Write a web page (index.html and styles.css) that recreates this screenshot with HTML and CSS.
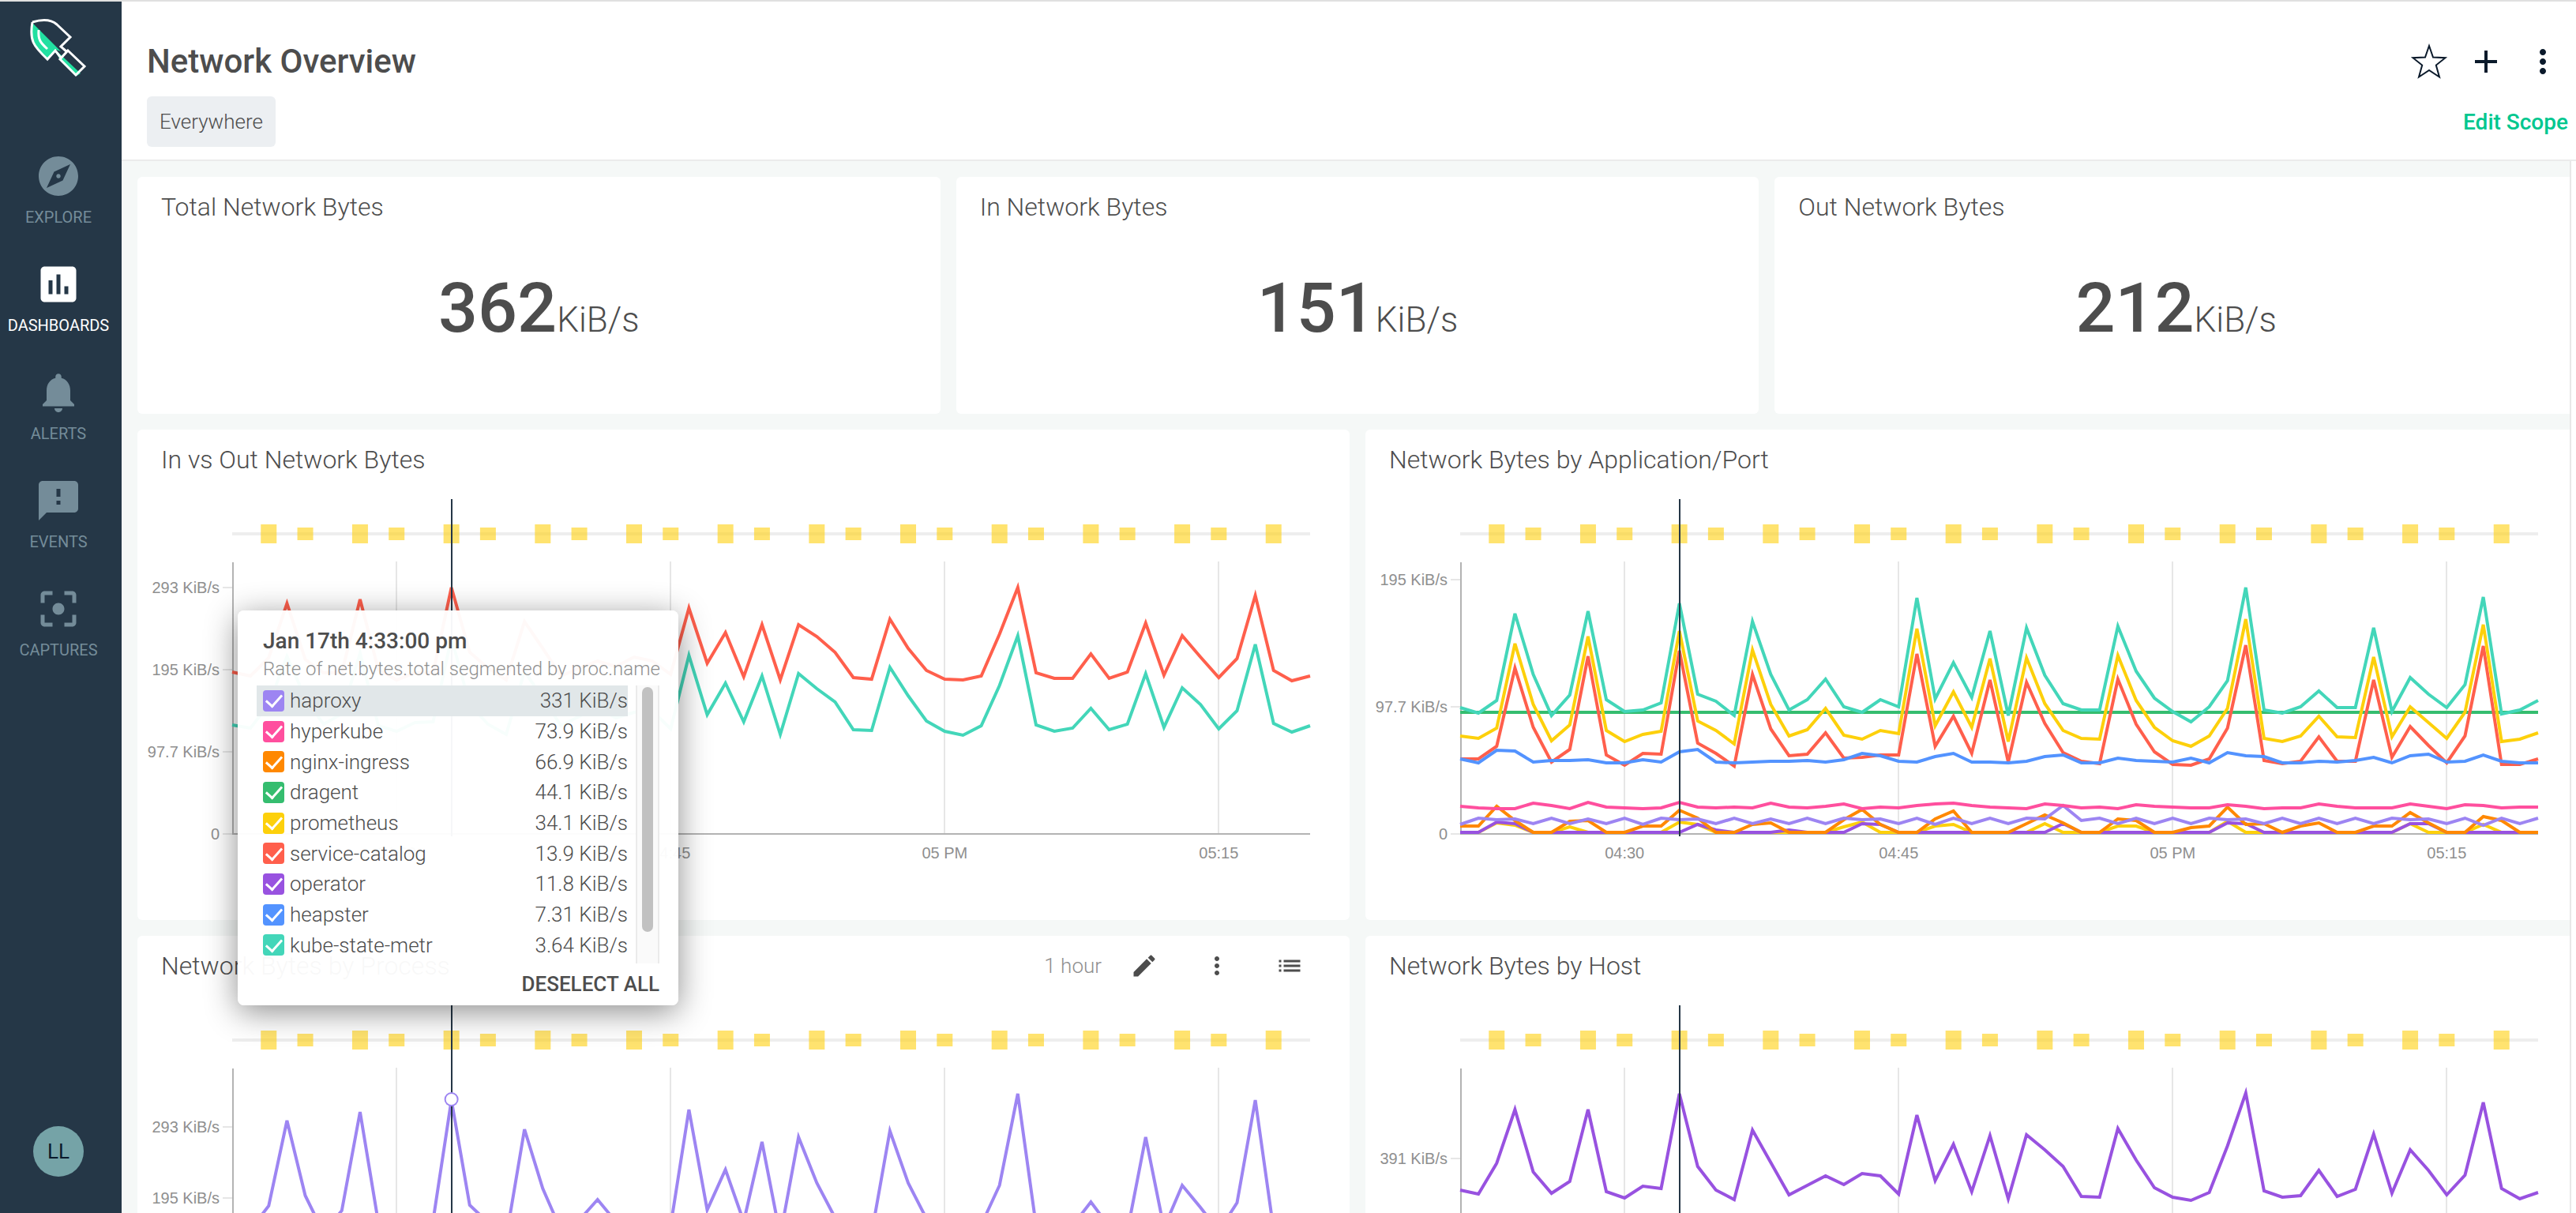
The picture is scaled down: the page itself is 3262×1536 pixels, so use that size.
FILE: index.html
```html
<!DOCTYPE html>
<html lang="en">
<head>
<meta charset="utf-8">
<title>Network Overview</title>
<link rel="stylesheet" href="styles.css">
</head>
<body>
<svg class="defs" aria-hidden="true">
  <defs>
    <!-- One user unit across is one minute, one user unit down is one pixel -->
    <g id="time-grid">
      <path class="event-line" d="M0 44H59"/>
      <path class="event-major" d="M2 32v24M7 32v24M12 32v24M17 32v24M22 32v24M27 32v24M32 32v24M37 32v24M42 32v24M47 32v24M52 32v24M57 32v24"/>
      <path class="event-minor" d="M4 36v16M9 36v16M14 36v16M19 36v16M24 36v16M29 36v16M34 36v16M39 36v16M44 36v16M49 36v16M54 36v16"/>
      <path class="grid-line" d="M9 79V424M24 79V424M39 79V424M54 79V424"/>
      <path class="axis-line" d="M0 424H59M0.04 80V424"/>
    </g>
    <path id="cursor" class="cursor-line" d="M12 0V427"/>
    <symbol id="icon-more" viewBox="0 0 24 24"><path d="M12 8c1.1 0 2-.9 2-2s-.9-2-2-2-2 .9-2 2 .9 2 2 2zm0 2c-1.100 0-2 .9-2 2s.9 2 2 2 2-.9 2-2-.9-2-2-2zm0 6c-1.100 0-2 .9-2 2s.9 2 2 2 2-.9 2-2-.9-2-2-2z"/></symbol>
  </defs>
</svg>

<div class="app">
  <nav class="sidebar">
    <a class="logo" href="#" aria-label="Home">
      <svg viewBox="0 0 74 74" fill="none">
        <path d="M4 5 40 41 34 39 23 50C4 33-1 25 4 5Z" fill="#22e0a1"/>
        <path d="M31 37 65 69 60 72 38 50Z" fill="#22e0a1"/>
        <path d="M4 4C14 1 27 0 35 7L52 23 40 35 47 41M40 49 33 40 23 51C5 34 0 27 4 4M49 40 70 60 59 71 39 51Z" stroke="#fff" stroke-width="3"/>
        <path d="M12 14C11 26 14 30 23 38" stroke="#fff" stroke-width="3"/>
      </svg>
    </a>
    <ul class="nav">
      <li><a class="nav-item" href="#"><svg viewBox="0 0 24 24"><path d="M12 10.900c-.61 0-1.100.49-1.100 1.100s.49 1.100 1.100 1.100c.61 0 1.100-.49 1.100-1.100s-.49-1.100-1.100-1.100zM12 2C6.480 2 2 6.480 2 12s4.480 10 10 10 10-4.480 10-10S17.520 2 12 2zm2.190 12.190L6 18l3.810-8.190L18 6l-3.810 8.190z"/></svg>EXPLORE</a></li>
      <li><a class="nav-item active" href="#"><svg viewBox="0 0 24 24"><path d="M19 3H5c-1.100 0-2 .9-2 2v14c0 1.100.9 2 2 2h14c1.100 0 2-.9 2-2V5c0-1.100-.9-2-2-2zM9 17H7v-7h2v7zm4 0h-2V7h2v10zm4 0h-2v-4h2v4z"/></svg>DASHBOARDS</a></li>
      <li><a class="nav-item" href="#"><svg viewBox="0 0 24 24"><path d="M12 22c1.100 0 2-.9 2-2h-4c0 1.100.9 2 2 2zm6-6v-5c0-3.070-1.630-5.640-4.500-6.320V4c0-.83-.67-1.500-1.500-1.500s-1.500.67-1.500 1.500v.68C7.640 5.360 6 7.920 6 11v5l-2 2v1h16v-1l-2-2z"/></svg>ALERTS</a></li>
      <li><a class="nav-item" href="#"><svg viewBox="0 0 24 24"><path d="M20 2H4c-1.100 0-2 .9-2 2v18l4-4h14c1.100 0 2-.9 2-2V4c0-1.100-.9-2-2-2zm-7 12h-2v-2h2v2zm0-4h-2V6h2v4z"/></svg>EVENTS</a></li>
      <li><a class="nav-item" href="#"><svg viewBox="0 0 24 24"><path d="M12 9c-1.660 0-3 1.340-3 3s1.340 3 3 3 3-1.340 3-3-1.340-3-3-3zm-7 6H3v4c0 1.100.9 2 2 2h4v-2H5v-4zM5 5h4V3H5c-1.100 0-2 .9-2 2v4h2V5zm14-2h-4v2h4v4h2V5c0-1.100-.9-2-2-2zm0 16h-4v2h4c1.100 0 2-.9 2-2v-4h-2v4z"/></svg>CAPTURES</a></li>
    </ul>
    <button class="avatar" type="button">LL</button>
  </nav>

  <main class="main">
    <header class="header">
      <div class="header-row">
        <h1>Network Overview</h1>
        <div class="header-actions">
          <button class="icon-button" type="button" aria-label="Favorite"><svg viewBox="0 0 48 48"><path d="M24 4 29 18.500 44.500 19.200 32.800 28.500 37 43.500 24 35 11 43.500 15.200 28.500 3.500 19.200 19 18.500Z" fill="none" stroke="currentColor" stroke-width="2"/></svg></button>
          <button class="icon-button" type="button" aria-label="Add"><svg viewBox="0 0 48 48"><path d="M24 10V38M10 24H38" stroke="currentColor" stroke-width="4"/></svg></button>
          <button class="icon-button" type="button" aria-label="More"><svg><use href="#icon-more"/></svg></button>
        </div>
      </div>
      <div class="header-row">
        <button class="scope" type="button">Everywhere</button>
        <a class="edit-scope" href="#">Edit Scope</a>
      </div>
    </header>

    <div class="content">
      <div class="grid">
        <section class="card stat"><h2>Total Network Bytes</h2><p class="value">362<span>KiB/s</span></p></section>
        <section class="card stat"><h2>In Network Bytes</h2><p class="value">151<span>KiB/s</span></p></section>
        <section class="card stat"><h2>Out Network Bytes</h2><p class="value">212<span>KiB/s</span></p></section>

        <section class="card chart">
          <div class="card-head"><h2>In vs Out Network Bytes</h2></div>
          <div class="chart-body">
            <ol class="y-axis step-104"><li>293 KiB/s</li><li>195 KiB/s</li><li>97.7 KiB/s</li><li>0</li></ol>
            <div class="plot">
              <svg viewBox="0 0 59 428" preserveAspectRatio="none">
                <use href="#time-grid"/>
                <polyline class="line teal" points="0,286 1,290 2,260 3,199 4,252 5,285 6,272 7,195 8,287 9,294 10,283 11,282 12,176 13,260 14,285 15,298 16,218 17,252 18,287 19,275 20,264 21,277 22,270 23,268 24,291 25,198 26,273 27,233 28,282 29,224 30,298 31,221 32,240 33,257 34,292 35,293 36,213 37,249 38,281 39,294 40,299 41,287 42,236 43,173 44,286 45,294 46,290 47,265 48,292 49,285 50,221 51,289 52,239 53,260 54,291 55,268 56,184 57,284 58,295 59,287"/>
                <polyline class="line red" points="0,219 1,224 2,201 3,132 4,203 5,220 6,220 7,127 8,216 9,229 10,220 11,220 12,112 13,194 14,214 15,229 16,155 17,189 18,224 19,214 20,205 21,212 22,200 23,205 24,222 25,138 26,208 27,169 28,225 29,159 30,229 31,159 32,174 33,194 34,226 35,228 36,152 37,189 38,217 39,228 40,229 41,224 42,171 43,112 44,220 45,227 46,227 47,196 48,227 49,219 50,157 51,223 52,173 53,200 54,226 55,202 56,122 57,217 58,230 59,224"/>
                <use href="#cursor"/>
              </svg>
              <div class="x-axis"><span>04:30</span><span>04:45</span><span>05 PM</span><span>05:15</span></div>

              <div class="tooltip">
                <h3>Jan 17th 4:33:00 pm</h3>
                <p>Rate of net.bytes.total segmented by proc.name</p>
                <div class="tooltip-scroll">
                  <ul class="series">
                    <li class="selected"><label><input class="c-lavender" type="checkbox" checked>haproxy</label><span>331 KiB/s</span></li>
                    <li><label><input class="c-pink" type="checkbox" checked>hyperkube</label><span>73.9 KiB/s</span></li>
                    <li><label><input class="c-orange" type="checkbox" checked>nginx-ingress</label><span>66.9 KiB/s</span></li>
                    <li><label><input class="c-green" type="checkbox" checked>dragent</label><span>44.1 KiB/s</span></li>
                    <li><label><input class="c-yellow" type="checkbox" checked>prometheus</label><span>34.1 KiB/s</span></li>
                    <li><label><input class="c-red" type="checkbox" checked>service-catalog</label><span>13.9 KiB/s</span></li>
                    <li><label><input class="c-purple" type="checkbox" checked>operator</label><span>11.8 KiB/s</span></li>
                    <li><label><input class="c-blue" type="checkbox" checked>heapster</label><span>7.31 KiB/s</span></li>
                    <li><label><input class="c-teal" type="checkbox" checked>kube-state-metr</label><span>3.64 KiB/s</span></li>
                  </ul>
                  <div class="scroll-track"><div class="scroll-thumb"></div></div>
                </div>
                <button class="deselect" type="button">DESELECT ALL</button>
              </div>
            </div>
          </div>
        </section>

        <section class="card chart">
          <div class="card-head"><h2>Network Bytes by Application/Port</h2></div>
          <div class="chart-body">
            <ol class="y-axis step-161"><li>195 KiB/s</li><li>97.7 KiB/s</li><li>0</li></ol>
            <div class="plot">
              <svg viewBox="0 0 59 428" preserveAspectRatio="none">
                <use href="#time-grid"/>
                <polyline class="line yellow" points="0,422 1,422 2,410 3,413 4,422 5,422 6,415 7,422 11,422 12,409 13,412 14,422 20,422 21,415 22,409 23,422 25,422 26,414 27,412 28,422 31,422 32,411 33,422 35,422 36,414 37,414 38,422 41,422 42,408 43,422 51,422 52,411 53,422 55,422 56,412 57,422 59,422"/>
                <polyline class="line purple" points="0,422 1,422 2,409 3,411 4,422 12,422 13,412 14,419 15,422 17,422 18,419 19,422 21,422 22,411 23,412 24,422 32,422 33,411 34,422 41,422 42,410 43,411 44,422 51,422 52,411 53,411 54,422 59,422"/>
                <polyline class="line orange" points="0,414 1,414 2,389 3,407 4,422 5,422 6,408 7,407 8,422 9,422 10,414 11,414 12,394 13,404 14,422 15,422 16,412 17,410 18,422 19,422 20,422 21,406 22,393 23,412 24,422 25,422 26,405 27,395 28,422 29,422 30,422 31,411 32,400 33,410 34,422 35,422 36,405 37,407 38,422 39,422 40,416 41,414 42,390 43,412 44,411 45,422 46,414 47,410 48,422 49,422 50,414 51,414 52,397 53,410 54,422 55,422 56,402 57,407 58,422 59,422"/>
                <polyline class="line lavender" points="0,412 1,404 2,406 3,405 4,411 5,404 6,411 7,405 8,411 9,404 10,412 11,404 12,406 13,405 14,411 15,404 16,411 17,405 18,411 19,404 20,411 21,404 22,406 23,405 24,411 25,404 26,412 27,404 28,411 29,404 30,411 31,404 32,405 33,388 34,407 35,404 36,411 37,404 38,411 39,404 40,411 41,404 42,406 43,405 44,411 45,404 46,411 47,404 48,411 49,404 50,411 51,404 52,406 53,405 54,411 55,404 56,413 57,404 58,411 59,404"/>
                <polyline class="line pink" points="0,389 1,391 2,392 3,392 4,385 5,388 6,392 7,384 8,390 9,391 10,392 11,391 12,384 13,390 14,391 15,390 16,391 17,385 18,390 19,391 20,389 21,386 22,392 23,390 24,391 25,388 26,386 27,385 28,388 29,390 30,391 31,392 32,386 33,388 34,391 35,390 36,392 37,387 38,389 39,390 40,391 41,391 42,387 43,389 44,392 45,391 46,391 47,386 48,389 49,391 50,391 51,391 52,386 53,389 54,392 55,387 56,388 57,391 58,390 59,390"/>
                <polyline class="line green" points="0,270 59,270"/>
                <polyline class="line red" points="0,329 1,329 2,313 3,214 4,289 5,333 6,317 7,199 8,324 9,337 10,322 11,323 12,192 13,309 14,322 15,338 16,222 17,291 18,325 19,323 20,296 21,328 22,327 23,324 24,324 25,196 26,313 27,275 28,322 29,229 30,333 31,232 32,284 33,321 34,332 35,335 36,228 37,285 38,320 39,336 40,337 41,329 42,290 43,185 44,331 45,335 46,332 47,301 48,332 49,332 50,229 51,327 52,288 53,312 54,334 55,300 56,186 57,336 58,336 59,329"/>
                <polyline class="line blue" points="0,329 1,334 2,318 3,319 4,333 5,331 6,331 7,330 8,334 9,334 10,330 11,333 12,320 13,317 14,333 15,334 16,333 17,332 18,332 19,331 20,333 21,330 22,322 23,325 24,332 25,333 26,326 27,322 28,333 29,333 30,334 31,332 32,326 33,324 34,334 35,334 36,328 37,331 38,332 39,333 40,328 41,334 42,321 43,325 44,326 45,334 46,334 47,332 48,333 49,331 50,327 51,334 52,325 53,323 54,333 55,332 56,324 57,332 58,334 59,334"/>
                <polyline class="line yellow" points="0,300 1,303 2,290 3,183 4,260 5,306 6,286 7,174 8,293 9,307 10,298 11,294 12,167 13,281 14,293 15,310 16,191 17,260 18,300 19,292 20,265 21,299 22,304 23,293 24,297 25,164 26,287 27,244 28,289 29,202 30,307 31,201 32,259 33,293 34,303 35,304 36,198 37,255 38,289 39,306 40,313 41,300 42,265 43,152 44,303 45,307 46,300 47,275 48,301 49,302 50,200 51,301 52,263 53,283 54,303 55,270 56,159 57,307 58,304 59,296"/>
                <polyline class="line teal" points="0,264 1,271 2,255 3,145 4,222 5,274 6,248 7,142 8,254 9,269 10,267 11,258 12,132 13,247 14,256 15,274 16,155 17,222 18,267 19,254 20,228 21,263 22,270 23,254 24,263 25,125 26,253 27,207 28,251 29,167 30,274 31,163 32,223 33,259 34,267 35,267 36,161 37,218 38,252 39,269 40,282 41,263 42,230 43,112 44,267 45,271 46,263 47,243 48,264 49,264 50,163 51,269 52,226 53,247 54,264 55,235 56,124 57,272 58,267 59,255"/>
                <use href="#cursor"/>
              </svg>
              <div class="x-axis"><span>04:30</span><span>04:45</span><span>05 PM</span><span>05:15</span></div>
            </div>
          </div>
        </section>

        <section class="card chart">
          <div class="card-head">
            <h2>Network Bytes by Process</h2>
            <div class="card-tools">
              <span>1 hour</span>
              <button type="button" aria-label="Edit"><svg viewBox="0 0 24 24"><path d="M3 17.250V21h3.750L17.810 9.940l-3.750-3.750L3 17.250zM20.710 7.040c.39-.39.39-1.020 0-1.410l-2.340-2.340c-.39-.39-1.020-.39-1.410 0l-1.830 1.830 3.750 3.750 1.830-1.830z"/></svg></button>
              <button type="button" aria-label="Panel menu"><svg><use href="#icon-more"/></svg></button>
              <button type="button" aria-label="Legend"><svg viewBox="0 0 24 24"><path d="M3 13h2v-2H3v2zm0 4h2v-2H3v2zm0-8h2V7H3v2zm4 4h14v-2H7v2zm0 4h14v-2H7v2zM7 7v2h14V7H7z"/></svg></button>
            </div>
          </div>
          <div class="chart-body">
            <ol class="y-axis step-90"><li>293 KiB/s</li><li>195 KiB/s</li><li>97.7 KiB/s</li><li>0</li></ol>
            <div class="plot">
              <svg viewBox="0 0 59 428" preserveAspectRatio="none">
                <use href="#time-grid"/>
                <polyline class="line lavender" points="0,284 1,284 2,254 3,146 4,241 5,288 6,260 7,135 8,275 9,300 10,287 11,272 12,120 13,253 14,275 15,294 16,157 17,232 18,285 19,272 20,246 21,274 22,267 23,270 24,279 25,132 26,259 27,208 28,274 29,173 30,292 31,167 32,225 33,269 34,294 35,289 36,159 37,225 38,270 39,294 40,297 41,278 42,228 43,112 44,279 45,290 46,279 47,249 48,280 49,286 50,167 51,282 52,228 53,256 54,286 55,250 56,120 57,284 58,290 59,287"/>
                <use href="#cursor"/>
                <path class="dot-ring" d="M12 119h0"/>
                <path class="dot-fill" d="M12 119h0"/>
              </svg>
              <div class="x-axis"><span>04:30</span><span>04:45</span><span>05 PM</span><span>05:15</span></div>
            </div>
          </div>
        </section>

        <section class="card chart">
          <div class="card-head"><h2>Network Bytes by Host</h2></div>
          <div class="chart-body">
            <ol class="y-axis step-230"><li>391 KiB/s</li><li>0</li></ol>
            <div class="plot">
              <svg viewBox="0 0 59 428" preserveAspectRatio="none">
                <use href="#time-grid"/>
                <polyline class="line purple" points="0,234 1,239 2,200 3,132 4,211 5,238 6,223 7,132 8,236 9,244 10,229 11,232 12,112 13,204 14,234 15,246 16,158 17,199 18,240 19,228 20,216 21,227 22,213 23,216 24,239 25,139 26,222 27,176 28,236 29,165 30,245 31,164 32,183 33,204 34,242 35,243 36,156 37,196 38,231 39,243 40,247 41,237 42,178 43,111 44,235 45,243 46,241 47,209 48,242 49,233 50,163 51,238 52,183 53,209 54,240 55,215 56,123 57,232 58,245 59,237"/>
                <use href="#cursor"/>
              </svg>
              <div class="x-axis"><span>04:30</span><span>04:45</span><span>05 PM</span><span>05:15</span></div>
            </div>
          </div>
        </section>
      </div>
    </div>
  </main>
</div>
</body>
</html>
```
FILE: styles.css
```css
* { box-sizing: border-box; }

body {
  margin: 0;
  font-family: Roboto, "Liberation Sans", sans-serif;
  font-weight: 300;
  color: #4d4d4d;
}

h1, h2, h3, p, ul, ol { margin: 0; padding: 0; }
ul, ol { list-style: none; }
a { text-decoration: none; }
svg { display: block; }

button {
  padding: 0;
  border: 0;
  background: none;
  color: inherit;
  font: inherit;
  cursor: pointer;
}

.defs { position: absolute; width: 0; height: 0; }

.app {
  display: flex;
  height: 100vh;
  overflow: hidden;
  border-top: 2px solid #e0e0e0;
}

/* Sidebar */
.sidebar {
  display: flex;
  flex: none;
  flex-direction: column;
  align-items: center;
  width: 154px;
  padding: 22px 6px 46px 0;
  background: #253747;
}

.logo svg { width: 74px; height: 74px; }

.nav {
  display: flex;
  flex: 1;
  flex-direction: column;
  gap: 43px;
  padding-top: 95px;
}

.nav-item {
  display: flex;
  flex-direction: column;
  align-items: center;
  gap: 10px;
  color: #748c99;
  font-size: 20px;
  font-weight: 400;
  line-height: 24px;
}

.nav-item svg { width: 60px; height: 60px; fill: currentColor; }
.nav-item.active { color: #fff; }

.avatar {
  width: 64px;
  height: 64px;
  border-radius: 50%;
  background: #75a3a7;
  color: #0b1a2b;
  font-size: 26px;
  font-weight: 400;
}

/* Header */
.main {
  display: flex;
  flex: 1;
  flex-direction: column;
  min-width: 0;
}

.header {
  flex: none;
  padding: 40px 10px 16px 32px;
  border-bottom: 2px solid #ebebeb;
}

.header-row {
  display: flex;
  align-items: center;
  justify-content: space-between;
}

.header-row + .header-row { margin-top: 8px; }

h1 {
  font-size: 42px;
  font-weight: 500;
  line-height: 72px;
}

.header-actions {
  display: flex;
  gap: 24px;
  padding-right: 8px;
  color: #0b1a2b;
}

.icon-button svg { width: 48px; height: 48px; fill: currentColor; }

.scope {
  height: 64px;
  padding: 0 16px;
  border-radius: 6px;
  background: #eceff2;
  font-size: 26px;
}

.edit-scope {
  color: #00c78f;
  font-size: 28px;
  font-weight: 500;
}

/* Dashboard grid */
.content {
  flex: 1;
  min-height: 0;
  overflow: hidden auto;
  scrollbar-width: none;
  margin-right: 6px;
  border-right: 2px solid #e8e8e8;
  background: #f5f8f7;
}

.grid {
  display: grid;
  grid-template-columns: repeat(6, minmax(0, 1fr));
  gap: 20px;
  margin: 20px -10px 20px 20px;
}

.card {
  border-radius: 6px;
  background: #fff;
}

.card h2 {
  font-size: 32px;
  font-weight: 300;
  line-height: 40px;
}

.stat {
  grid-column: span 2;
  height: 300px;
  padding: 18px 30px;
}

.value {
  font-size: 88px;
  font-weight: 500;
  line-height: 104px;
  padding-top: 56px;
  text-align: center;
}

.value span { font-size: 44px; font-weight: 300; }

.chart {
  grid-column: span 3;
  height: 621px;
  padding: 18px 50px 0 0;
}

.card-head {
  display: flex;
  align-items: center;
  justify-content: space-between;
  padding: 0 8px 0 30px;
}

.card-tools {
  display: flex;
  align-items: center;
  gap: 56px;
  color: #4d4d4d;
}

.card-tools span {
  margin-right: -20px;
  color: #8f8f8f;
  font-size: 26px;
}

.card-tools svg { width: 36px; height: 36px; fill: currentColor; }

.chart-body {
  display: flex;
  padding-top: 30px;
}

/* Each label is centred on its tick; the last one sits on the zero line */
.y-axis {
  display: flex;
  flex: none;
  flex-direction: column;
  justify-content: flex-end;
  width: 120px;
  height: 436px;
  color: #8f8f8f;
  font-family: "Liberation Sans", sans-serif;
  font-size: 20px;
  font-weight: 400;
  line-height: 24px;
}

.y-axis li {
  display: flex;
  flex: none;
  align-items: center;
  justify-content: flex-end;
  gap: 4px;
  height: 24px;
}

.y-axis li::after {
  width: 12px;
  height: 2px;
  background: #e6e6e6;
  content: "";
}

.step-104 { gap: 80px; }
.step-161 { gap: 137px; }
.step-90 { gap: 66px; }
.step-230 { gap: 206px; }

.plot {
  position: relative;
  flex: 1;
  min-width: 0;
}

.plot > svg { width: 100%; height: 428px; overflow: visible; }

.x-axis {
  display: grid;
  grid-template-columns: 9fr 15fr 15fr 15fr 5fr;
  padding-top: 8px;
  color: #8f8f8f;
  font-family: "Liberation Sans", sans-serif;
  font-size: 20px;
  font-weight: 400;
  line-height: 24px;
}

.x-axis span {
  display: flex;
  justify-content: center;
  width: 0;
  white-space: nowrap;
}

.x-axis span:first-child { grid-column: 2; }

.plot path, .plot polyline, #time-grid path, #cursor {
  fill: none;
  vector-effect: non-scaling-stroke;
}

.event-line { stroke: #eee; stroke-width: 4; }
.event-major, .event-minor { stroke: #ffd00f; stroke-opacity: .6; stroke-width: 20; }
.grid-line { stroke: #e6e6e6; stroke-width: 2; shape-rendering: crispEdges; }
.axis-line { stroke: #b3b3b3; stroke-width: 2; shape-rendering: crispEdges; }
.cursor-line { stroke: #253747; stroke-width: 2; shape-rendering: crispEdges; }
.dot-ring, .dot-fill { stroke-linecap: round; }
.dot-ring { stroke: #9d85f2; stroke-width: 18; }
.dot-fill { stroke: #fff; stroke-width: 14; }

.line { stroke-width: 4; }
.lavender { stroke: #9d85f2; }
.pink { stroke: #ff4f9e; }
.orange { stroke: #ff8800; }
.green { stroke: #35bd6f; }
.yellow { stroke: #fdd00b; }
.red { stroke: #ff5f4c; }
.purple { stroke: #9852e0; }
.blue { stroke: #5393ff; }
.teal { stroke: #43d6b9; }

/* Hover tooltip */
.tooltip {
  position: absolute;
  top: 141px;
  left: 7px;
  z-index: 1;
  display: flex;
  flex-direction: column;
  width: 558px;
  height: 500px;
  padding: 23px 24px 0;
  border-radius: 8px;
  background: rgba(255, 255, 255, .96);
  box-shadow: 0 8px 40px rgba(0, 0, 0, .45);
  font-size: 26px;
}

.tooltip h3 {
  padding-left: 8px;
  font-size: 28px;
  font-weight: 500;
  line-height: 32px;
}

.tooltip p {
  padding: 0 0 2px 8px;
  color: #8f8f8f;
  font-size: 24px;
  line-height: 38px;
  white-space: nowrap;
}

.tooltip-scroll {
  display: flex;
  align-items: flex-start;
  gap: 10px;
}

.series {
  display: flex;
  flex: 1;
  flex-direction: column;
  height: 348px;
}

.series li {
  display: flex;
  flex: 1;
  align-items: center;
  justify-content: space-between;
  padding-left: 8px;
}

.series .selected { background: #e1e7e9; }

.series label {
  display: flex;
  align-items: center;
  gap: 7px;
}

.series input {
  display: flex;
  align-items: center;
  justify-content: center;
  width: 27px;
  height: 27px;
  margin: 0;
  border-radius: 4px;
  appearance: none;
}

.series input::after {
  width: 9px;
  height: 17px;
  margin-bottom: 4px;
  border: solid #fff;
  border-width: 0 3px 3px 0;
  content: "";
  transform: rotate(42deg);
}

.c-lavender { background: #9d85f2; }
.c-pink { background: #ff4f9e; }
.c-orange { background: #ff8800; }
.c-green { background: #35bd6f; }
.c-yellow { background: #fdd00b; }
.c-red { background: #ff5f4c; }
.c-purple { background: #9852e0; }
.c-blue { background: #5393ff; }
.c-teal { background: #43d6b9; }

.scroll-track {
  width: 30px;
  height: 352px;
  padding: 2px 6px;
  border: solid #ebebeb;
  border-width: 0 2px;
  background: #fafafa;
}

.scroll-thumb {
  height: 310px;
  border-radius: 8px;
  background: #c1c1c1;
}

.deselect {
  align-self: flex-end;
  padding-top: 10px;
  font-weight: 500;
  line-height: 32px;
}
```
